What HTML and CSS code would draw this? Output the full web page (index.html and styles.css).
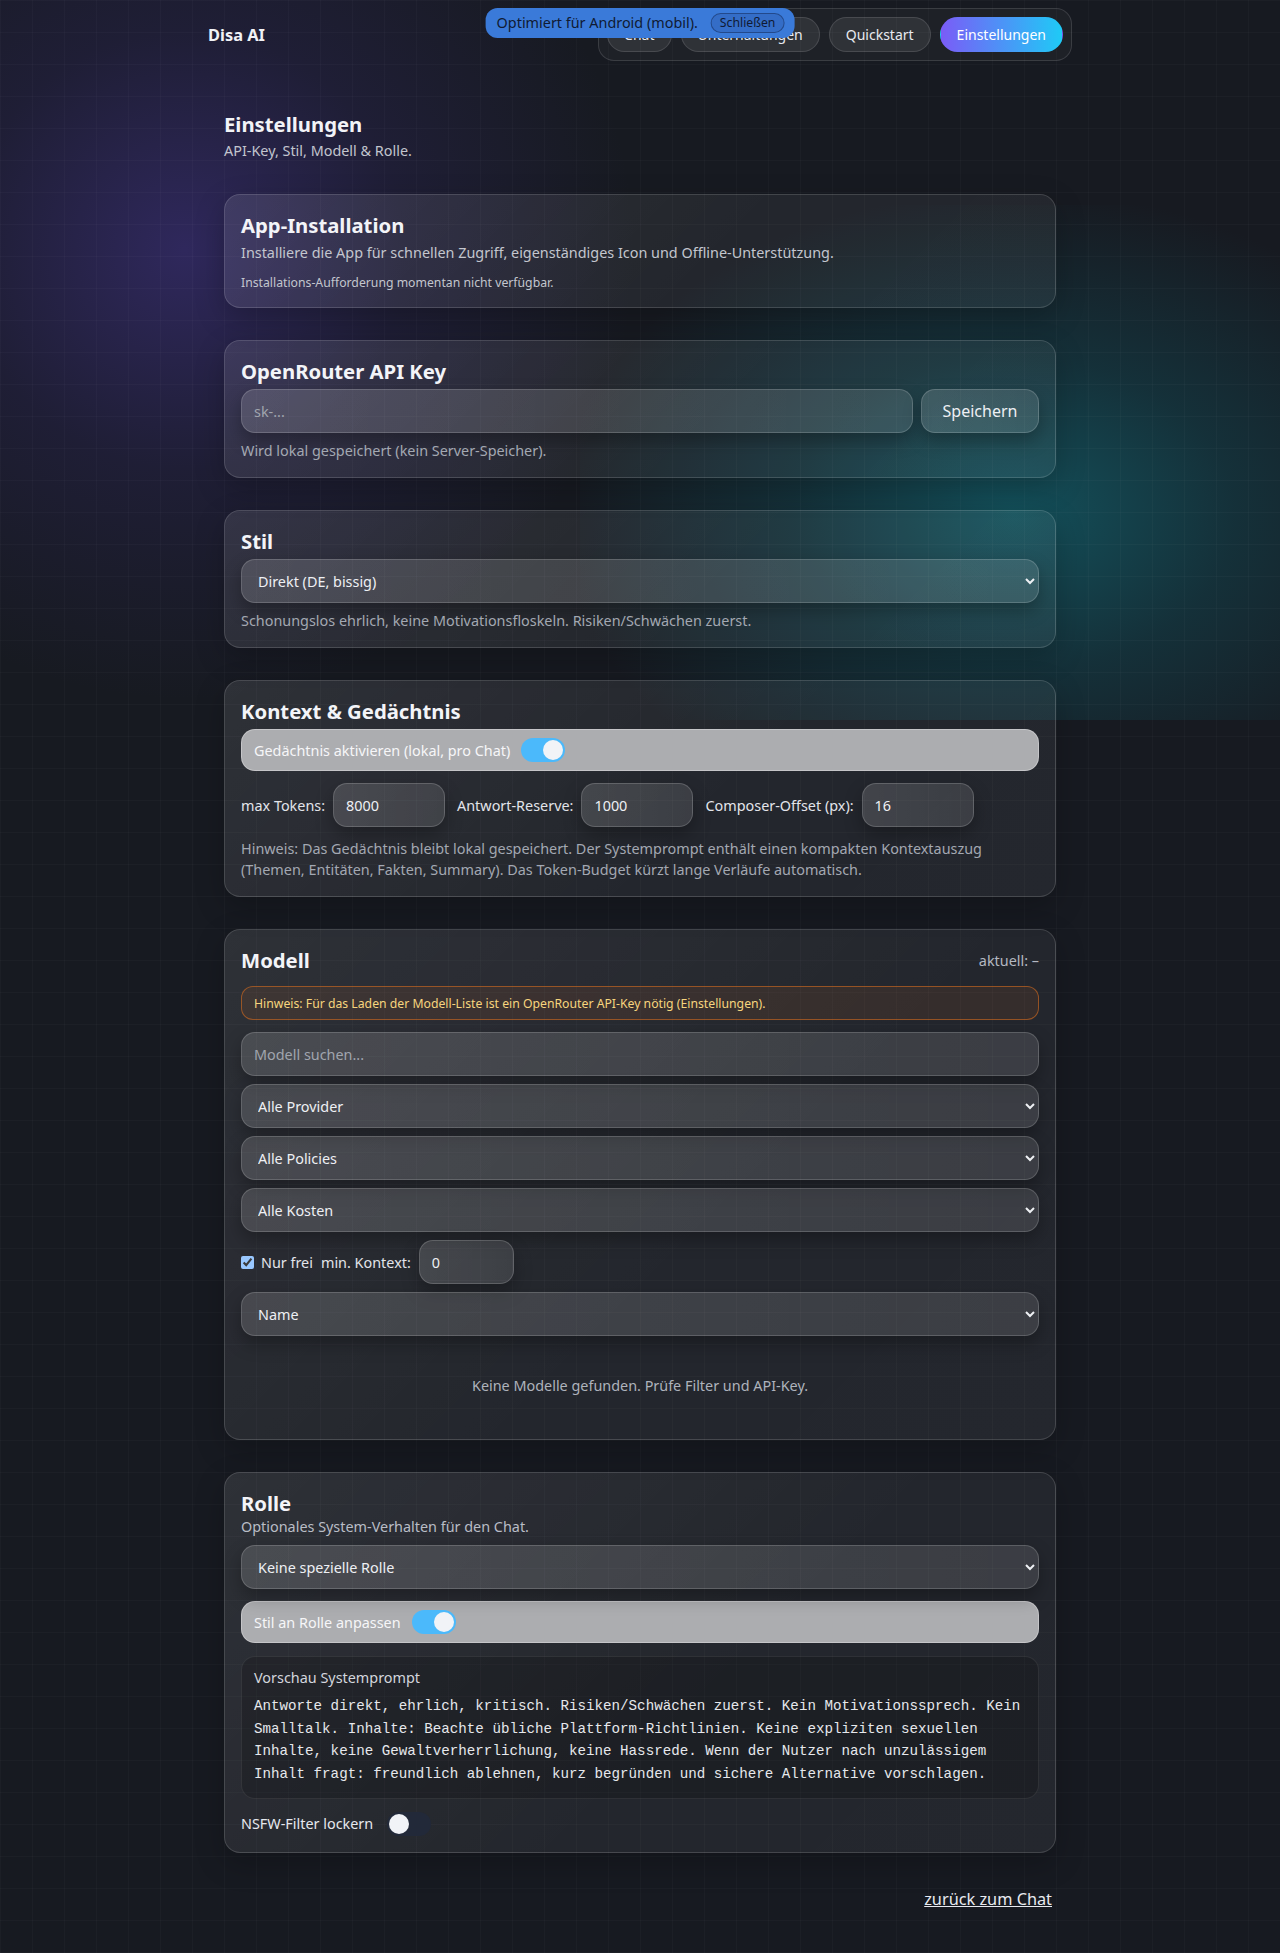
FILE: index.html
```html
<!DOCTYPE html>
<html lang="de">
<head>
<meta charset="utf-8">
<title>Disa AI – Einstellungen</title>
<link rel="stylesheet" href="styles.css">
</head>
<body>
<header class="topbar">
  <div class="topbar-inner">
    <div class="brand">Disa AI</div>
    <nav class="nav">
      <a class="nav-btn" href="#">Chat</a>
      <a class="nav-btn" href="#">Unterhaltungen</a>
      <a class="nav-btn" href="#">Quickstart</a>
      <a class="nav-btn active" href="#">Einstellungen</a>
    </nav>
  </div>
</header>

<div class="toast">
  <span>Optimiert für Android (mobil).</span>
  <button class="toast-close" type="button">Schließen</button>
</div>

<main class="page">
  <h1 class="page-title">Einstellungen</h1>
  <p class="page-sub">API-Key, Stil, Modell &amp; Rolle.</p>

  <section class="card">
    <h2 class="card-title">App-Installation</h2>
    <p class="card-desc">Installiere die App für schnellen Zugriff, eigenständiges Icon und Offline-Unterstützung.</p>
    <p class="card-note">Installations-Aufforderung momentan nicht verfügbar.</p>
  </section>

  <section class="card">
    <h2 class="card-title">OpenRouter API Key</h2>
    <div class="key-row">
      <input class="field key-input" type="text" placeholder="sk-...">
      <button class="field save-btn" type="button">Speichern</button>
    </div>
    <p class="hint">Wird lokal gespeichert (kein Server-Speicher).</p>
  </section>

  <section class="card">
    <h2 class="card-title">Stil</h2>
    <select class="field select first">
      <option>Direkt (DE, bissig)</option>
    </select>
    <p class="hint">Schonungslos ehrlich, keine Motivationsfloskeln. Risiken/Schwächen zuerst.</p>
  </section>

  <section class="card">
    <h2 class="card-title">Kontext &amp; Gedächtnis</h2>
    <div class="toggle-row">
      <span>Gedächtnis aktivieren (lokal, pro Chat)</span>
      <span class="switch on"><span class="knob"></span></span>
    </div>
    <div class="num-row">
      <label class="num-group">max Tokens: <input class="field num" type="text" value="8000"></label>
      <label class="num-group">Antwort-Reserve: <input class="field num" type="text" value="1000"></label>
      <label class="num-group">Composer-Offset (px): <input class="field num" type="text" value="16"></label>
    </div>
    <p class="hint hint-para">Hinweis: Das Gedächtnis bleibt lokal gespeichert. Der Systemprompt enthält einen kompakten Kontextauszug (Themen, Entitäten, Fakten, Summary). Das Token-Budget kürzt lange Verläufe automatisch.</p>
  </section>

  <section class="card">
    <div class="card-head">
      <h2 class="card-title">Modell</h2>
      <span class="current">aktuell: –</span>
    </div>
    <div class="notice">Hinweis: Für das Laden der Modell-Liste ist ein OpenRouter API-Key nötig (Einstellungen).</div>
    <div class="stack">
      <input class="field" type="text" placeholder="Modell suchen...">
      <select class="field select"><option>Alle Provider</option></select>
      <select class="field select"><option>Alle Policies</option></select>
      <select class="field select"><option>Alle Kosten</option></select>
      <div class="filter-row">
        <label class="check"><input type="checkbox" checked> Nur frei</label>
        <label class="num-group">min. Kontext: <input class="field num small" type="text" value="0"></label>
      </div>
      <select class="field select"><option>Name</option></select>
    </div>
    <p class="empty">Keine Modelle gefunden. Prüfe Filter und API-Key.</p>
  </section>

  <section class="card last">
    <h2 class="card-title">Rolle</h2>
    <p class="card-sub">Optionales System-Verhalten für den Chat.</p>
    <select class="field select role-select"><option>Keine spezielle Rolle</option></select>
    <div class="toggle-row">
      <span>Stil an Rolle anpassen</span>
      <span class="switch on"><span class="knob"></span></span>
    </div>
    <div class="preview">
      <div class="preview-label">Vorschau Systemprompt</div>
      <div class="preview-text">Antworte direkt, ehrlich, kritisch. Risiken/Schwächen zuerst. Kein Motivationssprech. Kein Smalltalk. Inhalte: Beachte übliche Plattform-Richtlinien. Keine expliziten sexuellen Inhalte, keine Gewaltverherrlichung, keine Hassrede. Wenn der Nutzer nach unzulässigem Inhalt fragt: freundlich ablehnen, kurz begründen und sichere Alternative vorschlagen.</div>
    </div>
    <div class="nsfw-row">
      <span>NSFW-Filter lockern</span>
      <span class="switch off"><span class="knob"></span></span>
    </div>
  </section>

  <div class="back-row">
    <a class="back-link" href="#">zurück zum Chat</a>
  </div>
</main>
</body>
</html>
```

FILE: styles.css
```css
:root {
  color-scheme: dark;
}

* {
  box-sizing: border-box;
}

body {
  margin: 0;
  min-height: 100vh;
  font-family: "Noto Sans", "Open Sans", sans-serif;
  color: #eceef3;
  background-color: #171a21;
  background-image:
    linear-gradient(rgba(255, 255, 255, 0.022) 1px, transparent 1px),
    linear-gradient(90deg, rgba(255, 255, 255, 0.022) 1px, transparent 1px),
    radial-gradient(ellipse at 62% 60%, rgba(18, 104, 116, 0.7) 0%, rgba(16, 88, 100, 0.36) 36%, rgba(16, 70, 80, 0) 74%),
    radial-gradient(circle at 185px 250px, rgba(78, 58, 168, 0.44) 0, rgba(62, 46, 135, 0.2) 220px, rgba(40, 30, 90, 0) 450px);
  background-size: 32px 32px, 32px 32px, 700px 515px, auto;
  background-position: 0 0, 0 0, 580px 205px, 0 0;
  background-repeat: repeat, repeat, no-repeat, no-repeat;
}

/* ---------- top bar ---------- */
.topbar {
  padding: 8px 0;
}

.topbar-inner {
  width: 864px;
  margin: 0 auto;
  display: flex;
  justify-content: space-between;
  align-items: center;
}

.brand {
  font-size: 16.4px;
  font-weight: 700;
  color: #f1f2f6;
}

.nav {
  display: flex;
  gap: 9px;
  padding: 8px;
  border: 1px solid rgba(255, 255, 255, 0.13);
  border-radius: 16px;
  background: rgba(255, 255, 255, 0.03);
}

.nav-btn {
  font-size: 14px;
  line-height: 19px;
  padding: 7px 16px;
  border: 1px solid rgba(255, 255, 255, 0.12);
  border-radius: 999px;
  background: rgba(255, 255, 255, 0.08);
  color: #e8eaf0;
  text-decoration: none;
}

.nav-btn.active {
  background: linear-gradient(90deg, #7a5cf7, #1fcaf6);
  border-color: transparent;
  color: #ffffff;
}

/* ---------- toast ---------- */
.toast {
  position: fixed;
  top: 8px;
  left: 50%;
  transform: translateX(-50%);
  display: flex;
  align-items: center;
  gap: 13px;
  padding: 4px 10px 4px 11px;
  height: 30px;
  border-radius: 12px;
  background: #3a7ad9;
  color: #101a33;
  font-size: 14.4px;
  line-height: 20px;
  white-space: nowrap;
  z-index: 10;
}

.toast-close {
  font-family: inherit;
  font-size: 12.24px;
  line-height: 16px;
  padding: 1px 8px;
  border: 1px solid rgba(10, 20, 50, 0.4);
  border-radius: 10px;
  background: rgba(20, 40, 100, 0.15);
  color: #101a33;
}

/* ---------- page ---------- */
.page {
  width: 832px;
  margin: 0 auto;
  padding: 41px 0 43px;
}

.page-title {
  margin: 0 0 3px;
  font-size: 20.3px;
  line-height: 28px;
  font-weight: 700;
  color: #f2f3f7;
}

.page-sub {
  margin: 0 0 33px;
  font-size: 14.4px;
  line-height: 20px;
  color: #c2c5ce;
}

.card {
  border: 1px solid rgba(255, 255, 255, 0.14);
  border-radius: 16px;
  padding: 16px;
  margin-bottom: 32px;
  background: linear-gradient(135deg, rgba(255, 255, 255, 0.1), rgba(255, 255, 255, 0.055) 60%, rgba(255, 255, 255, 0.06));
  box-shadow: 0 10px 30px rgba(0, 0, 0, 0.22);
}

.card.last {
  margin-bottom: 0;
}

.card-title {
  margin: 0;
  font-size: 20.3px;
  line-height: 28px;
  font-weight: 700;
  color: #f3f4f8;
}

.card-desc {
  margin: 4px 0 0;
  font-size: 14.4px;
  line-height: 20px;
  color: #c3c6ce;
}

.card-note {
  margin: 12px 0 0;
  font-size: 12.24px;
  line-height: 16px;
  color: #c3c6ce;
}

.card-sub {
  margin: 0;
  font-size: 14.4px;
  line-height: 20px;
  color: #b9bdc6;
}

.hint {
  margin: 8px 0 0;
  font-size: 14.4px;
  line-height: 20px;
  color: #a3a8b2;
}

.hint-para {
  margin-top: 12px;
  line-height: 20.5px;
}

/* ---------- fields ---------- */
.field {
  height: 44px;
  border-radius: 14px;
  border: 1px solid rgba(255, 255, 255, 0.17);
  background: linear-gradient(90deg, rgba(255, 255, 255, 0.14), rgba(255, 255, 255, 0.11));
  color: #eef0f4;
  font-family: "Noto Sans", sans-serif;
  font-size: 14.4px;
  padding: 0 12px;
  box-shadow: 0 8px 18px rgba(0, 0, 0, 0.28);
  outline: none;
}

.field::placeholder {
  color: #a0a5ae;
}

.select {
  width: 100%;
  padding: 0 8px 0 12px;
}

.select.first,
.key-row {
  margin-top: 4px;
}

.key-row {
  display: flex;
  gap: 8px;
}

.key-input {
  flex: 1;
}

.save-btn {
  width: 118px;
  padding: 0;
  font-size: 16px;
  color: #eef0f4;
}

/* ---------- toggles ---------- */
.toggle-row {
  margin-top: 4px;
  height: 42px;
  display: flex;
  align-items: center;
  gap: 11px;
  padding: 0 12px;
  border-radius: 14px;
  border: 1px solid rgba(255, 255, 255, 0.3);
  background: #acadb0;
  color: #f6f6f8;
  font-size: 14.4px;
}

.switch {
  width: 44px;
  height: 24px;
  padding: 2px;
  border-radius: 12px;
  display: flex;
  align-items: center;
}

.switch.on {
  background: #4bb9fb;
  justify-content: flex-end;
}

.switch.off {
  background: #222939;
  justify-content: flex-start;
}

.knob {
  width: 20px;
  height: 20px;
  border-radius: 50%;
  background: #f1f3f7;
}

.num-row {
  display: flex;
  align-items: center;
  gap: 12px;
  margin-top: 12px;
}

.num-group {
  display: flex;
  align-items: center;
  gap: 8px;
  font-size: 14.4px;
  color: #e3e5eb;
}

.num {
  width: 112px;
}

.num.small {
  width: 95px;
}

/* ---------- model card ---------- */
.card-head {
  display: flex;
  justify-content: space-between;
  align-items: center;
}

.current {
  font-size: 14.4px;
  color: #b4b8c1;
}

.notice {
  margin-top: 12px;
  height: 34px;
  display: flex;
  align-items: center;
  padding: 0 12px;
  border-radius: 12px;
  border: 1px solid rgba(214, 108, 30, 0.6);
  background: rgba(190, 100, 40, 0.12);
  color: #f7d57e;
  font-size: 12.24px;
}

.stack {
  margin-top: 12px;
  display: flex;
  flex-direction: column;
  gap: 8px;
}

.filter-row {
  display: flex;
  align-items: center;
  gap: 8px;
}

.check {
  display: flex;
  align-items: center;
  gap: 7px;
  font-size: 14.4px;
  color: #e3e5eb;
}

.check input {
  margin: 0;
}

.empty {
  margin: 0;
  padding: 40px 0 27px;
  text-align: center;
  font-size: 14.4px;
  line-height: 20px;
  color: #aeb3bc;
}

/* ---------- role card ---------- */
.role-select {
  margin-top: 8px;
}

.card .toggle-row + .preview {
  margin-top: 13px;
}

.role-select + .toggle-row {
  margin-top: 12px;
}

.preview {
  padding: 12px;
  border-radius: 14px;
  border: 1px solid rgba(255, 255, 255, 0.08);
  background: rgba(0, 0, 0, 0.18);
}

.preview-label {
  font-size: 14.4px;
  line-height: 18px;
  color: #d3d6dd;
}

.preview-text {
  margin-top: 8px;
  font-family: "Liberation Mono", "Courier New", monospace;
  font-size: 14.2px;
  line-height: 22.7px;
  color: #e6e8ec;
  white-space: pre-wrap;
}

.nsfw-row {
  margin-top: 13px;
  display: flex;
  align-items: center;
  gap: 14px;
  font-size: 14.4px;
  color: #e6e8ee;
}

/* ---------- footer link ---------- */
.back-row {
  margin-top: 35px;
  display: flex;
  justify-content: flex-end;
  padding-right: 4px;
}

.back-link {
  font-size: 16.3px;
  line-height: 22px;
  color: #e8eaf0;
  text-decoration: underline;
}
```
